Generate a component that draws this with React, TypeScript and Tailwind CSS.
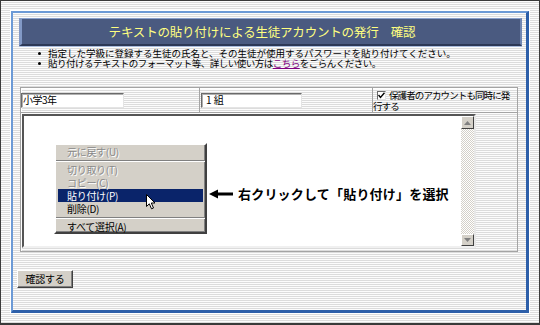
import React from "react";

const stripes =
  "bg-[repeating-linear-gradient(180deg,#fcfcfc_0px,#fcfcfc_1px,#dcdcdc_1px,#dcdcdc_2px)]";

function MenuItem({
  label,
  disabled,
  active,
}: {
  label: string;
  disabled?: boolean;
  active?: boolean;
}) {
  return (
    <div
      className={
        "h-[13px] mx-[2px] pl-[9px] flex items-center text-[10px] leading-[12px] tracking-[-0.3px] " +
        (active
          ? "bg-[#0a246a] text-white"
          : disabled
          ? "text-[#8a8a8a] [text-shadow:1px_1px_0_#ffffff]"
          : "text-black")
      }
    >
      {label}
    </div>
  );
}

function Sep() {
  return (
    <div className="h-[5px] flex items-center">
      <div className="w-full h-[2px] border-t border-t-[#808080] border-b border-b-white" />
    </div>
  );
}

export default function App() {
  return (
    <div
      className={
        "w-[540px] h-[325px] border border-b-2 border-[#3a3a3a] overflow-hidden text-black font-['Noto_Sans_CJK_JP','Noto_Sans',sans-serif] " +
        stripes
      }
    >
      {/* panel */}
      <div className="ml-[10px] mt-[10px] w-[518px] h-[302px] border-t-2 border-l-2 border-t-[#6c9ad6] border-l-[#6c9ad6] border-r-[3px] border-b-[3px] border-r-[#2d5fa9] border-b-[#2d5fa9] shadow-[0_0_0_1px_#ffffff]">
        {/* title bar */}
        <div className="ml-[6px] mt-[5px] w-[503px] h-[28px] bg-[#4a5a80] border-t border-t-[#8aa0cc] border-l-[3px] border-l-[#8299c6] border-r-2 border-r-[#6f86b2] border-b-2 border-b-[#2c3856] shadow-[0_1px_0_#a9bbdc] flex items-center justify-center pr-[18px]">
          <span className="text-[12.5px] leading-[14px] text-[#ffff80] tracking-[-0.2px] whitespace-pre">
            テキストの貼り付けによる生徒アカウントの発行　確認
          </span>
        </div>

        {/* bullets */}
        <div className="mt-[2px] ml-[25px] text-[9.5px] leading-[10px]">
          <div className="flex items-center h-[10px]">
            <span className="w-[10px] flex items-center">
              <span className="w-[3px] h-[3px] bg-black rounded-full" />
            </span>
            <span className="tracking-[0px] whitespace-nowrap">
              指定した学級に登録する生徒の氏名と、その生徒が使用するパスワードを貼り付けてください。
            </span>
          </div>
          <div className="flex items-center h-[10px]">
            <span className="w-[10px] flex items-center">
              <span className="w-[3px] h-[3px] bg-black rounded-full" />
            </span>
            <span className="tracking-[-0.5px] whitespace-nowrap">
              貼り付けるテキストのフォーマット等、詳しい使い方は
              <span className="text-[#800080] underline">こちら</span>
              をごらんください。
            </span>
          </div>
        </div>

        {/* table */}
        <div className="ml-[7px] mt-[19px] w-[498px] border border-[#a4a4a4] shadow-[inset_1px_1px_0_#ffffff]">
          {/* row 1 */}
          <div className="flex h-[25px] border-b border-[#a4a4a4]">
            <div className="w-[179px] flex items-center border-r border-[#a4a4a4]">
              <div className="w-[103px] h-[15px] bg-white border border-t-[#6a6a6a] border-l-[#6a6a6a] border-b-[#e4e4e4] border-r-[#e4e4e4] shadow-[inset_1px_1px_0_#b0b0b0] flex items-center pl-[1px] text-[10px] leading-[12px] tracking-[-0.5px]">
                小学3年
              </div>
            </div>
            <div className="w-[173px] flex items-center border-r border-[#a4a4a4] pl-[1px]">
              <div className="w-[101px] h-[15px] bg-white border border-t-[#6a6a6a] border-l-[#6a6a6a] border-b-[#e4e4e4] border-r-[#e4e4e4] shadow-[inset_1px_1px_0_#b0b0b0] flex items-center pl-[4px] text-[10px] leading-[12px] whitespace-pre">
                1 組
              </div>
            </div>
            <div className="flex-1 pt-[2px] text-[9.5px] leading-[11px] tracking-[-0.9px]">
              <div className="flex items-center h-[11px]">
                <span className="ml-[4px] mr-[3px] w-[9px] h-[9px] bg-white border border-t-[#6a6a6a] border-l-[#6a6a6a] border-b-[#e4e4e4] border-r-[#e4e4e4] flex items-center justify-center">
                  <svg width="7" height="7" viewBox="0 0 7 7">
                    <polyline
                      points="0.5,3 2.5,5.5 6.5,0.8"
                      fill="none"
                      stroke="#000"
                      strokeWidth="1.4"
                    />
                  </svg>
                </span>
                <span className="whitespace-nowrap">保護者のアカウントも同時に発</span>
              </div>
              <div className="h-[11px] whitespace-nowrap">行する</div>
            </div>
          </div>

          {/* row 2 */}
          <div className="h-[138px] pt-[1px] pl-[1px]">
            <div className="relative w-[454px] h-[134px] bg-white border-2 border-t-[#555555] border-l-[#555555] border-b-[#f0f0f0] border-r-[#e8e8e8] flex justify-end">
              {/* scrollbar */}
              <div className="w-[13px] h-full flex flex-col bg-[repeating-conic-gradient(#d4d0c8_0_25%,#ffffff_0_50%)] bg-[length:2px_2px]">
                <div className="h-[13px] bg-[#d4d0c8] border border-t-white border-l-white border-r-[#404040] border-b-[#404040] flex items-center justify-center">
                  <svg width="7" height="4" viewBox="0 0 7 4">
                    <polygon points="3.5,0 7,4 0,4" fill="#808080" />
                  </svg>
                </div>
                <div className="flex-1" />
                <div className="h-[12px] bg-[#d4d0c8] border border-t-white border-l-white border-r-[#404040] border-b-[#404040] flex items-center justify-center">
                  <svg width="7" height="4" viewBox="0 0 7 4">
                    <polygon points="0,0 7,0 3.5,4" fill="#808080" />
                  </svg>
                </div>
              </div>

              {/* context menu */}
              <div className="absolute left-[30px] top-[27px] w-[153px] h-[91px] bg-[#d4d0c8] border-2 border-t-white border-l-white border-r-[#404040] border-b-[#404040] shadow-[inset_-1px_-1px_0_#808080]">
                <MenuItem label="元に戻す(U)" disabled />
                <Sep />
                <MenuItem label="切り取り(T)" disabled />
                <MenuItem label="コピー(C)" disabled />
                <MenuItem label="貼り付け(P)" active />
                <MenuItem label="削除(D)" />
                <Sep />
                <MenuItem label="すべて選択(A)" />
              </div>

              {/* cursor */}
              <svg
                className="absolute left-[122px] top-[78px]"
                width="11"
                height="16"
                viewBox="0 0 11 16"
              >
                <path
                  d="M0.5,0.5 L0.5,12.5 L3.3,9.8 L5.5,14.8 L7.5,14 L5.3,9 L9,9 Z"
                  fill="#ffffff"
                  stroke="#000000"
                  strokeWidth="1"
                  strokeLinejoin="miter"
                />
              </svg>

              {/* annotation */}
              <div className="absolute left-[185px] top-[70px] h-[16px] flex items-center">
                <svg width="26" height="10" viewBox="0 0 26 10">
                  <polygon points="0,5 9,0.5 9,9.5" fill="#000" />
                  <rect x="8" y="3.5" width="16" height="3" fill="#000" />
                </svg>
                <span className="ml-[3px] text-[13px] leading-[16px] font-bold whitespace-nowrap tracking-[0.2px]">
                  右クリックして「貼り付け」を選択
                </span>
              </div>
            </div>
          </div>
        </div>

        {/* button */}
        <div className="ml-[4px] mt-[18px] w-[56px] h-[18px] bg-[#d4d0c8] border border-t-white border-l-white border-r-[#404040] border-b-[#404040] shadow-[inset_-1px_-1px_0_#808080] flex items-center justify-center text-[10px] leading-[12px] tracking-[-0.3px]">
          確認する
        </div>
      </div>
    </div>
  );
}
